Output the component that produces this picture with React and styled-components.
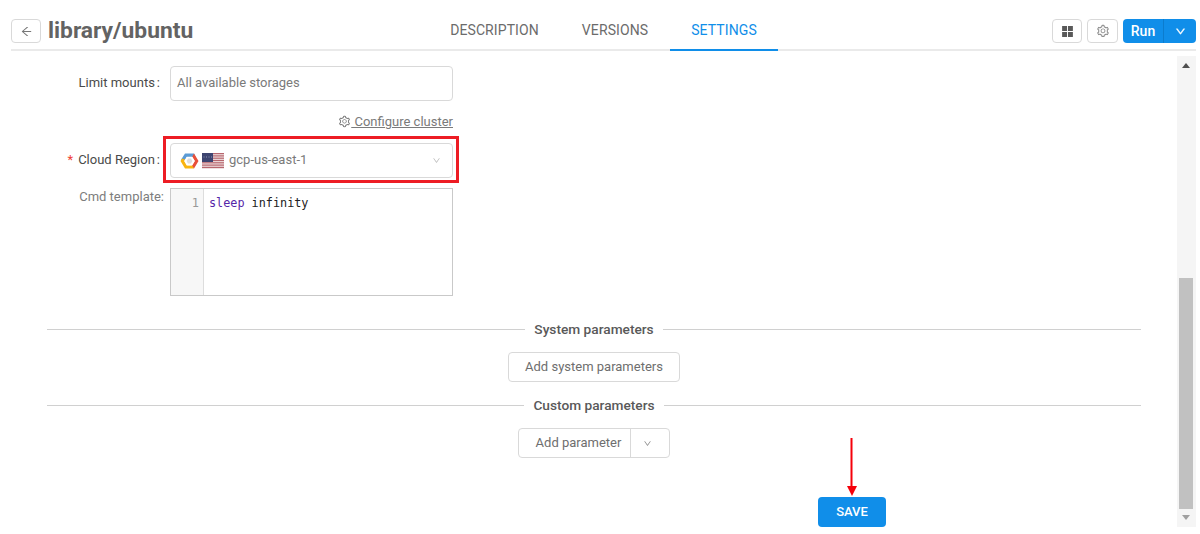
import React from 'react';
import styled, { createGlobalStyle } from 'styled-components';
import { AiOutlineSetting, AiOutlineArrowLeft, AiOutlineDown, AiFillAppstore } from 'react-icons/ai';

const GlobalStyle = createGlobalStyle`
  html, body {
    margin: 0;
    padding: 0;
    height: 534px;
    overflow: hidden;
    background: #fff;
    font-family: Roboto, "Liberation Sans", sans-serif;
    font-size: 14px;
    color: #595959;
  }
`;

const Page = styled.div`
  position: relative;
  width: 1200px;
  height: 534px;
  display: flex;
  flex-direction: column;
`;

const Header = styled.header`
  display: grid;
  grid-template-columns: 1fr auto 1fr;
  align-items: center;
  height: 49px;
  margin: 0 4px 0 11px;
  border-bottom: 2px solid #eaeaea;
  box-sizing: content-box;
`;

const TitleGroup = styled.div`
  display: flex;
  align-items: center;
  gap: 7px;
  margin-top: 11px;
`;

const IconButton = styled.button`
  display: flex;
  align-items: center;
  justify-content: center;
  width: ${p => p.$width || 30}px;
  height: 24px;
  padding: 0;
  background: #fff;
  border: 1px solid #d9d9d9;
  border-radius: 4px;
  color: ${p => p.$color || '#595959'};
  font-size: ${p => p.$size || 12}px;
`;

const Title = styled.h1`
  margin: 0;
  font-size: 22.8px;
  line-height: 26px;
  font-weight: 700;
  color: #636363;
`;

const Tabs = styled.nav`
  display: flex;
  align-self: stretch;
`;

const Tab = styled.div`
  display: flex;
  align-items: center;
  height: 51px;
  padding: 10px 21.5px 0;
  box-sizing: border-box;
  font-size: 14px;
  letter-spacing: 0.1px;
  color: ${p => (p.$active ? '#108ee9' : '#6b6b6b')};
  border-bottom: 2px solid ${p => (p.$active ? '#108ee9' : 'transparent')};
`;

const Actions = styled.div`
  display: flex;
  justify-content: flex-end;
  align-items: center;
  gap: 5px;
  margin-top: 11px;
`;

const RunButton = styled.div`
  display: flex;
  height: 24px;
  background: #108ee9;
  border-radius: 4px;
  color: #fff;
  font-size: 14px;
  font-weight: 500;
`;

const RunLabel = styled.span`
  display: flex;
  align-items: center;
  justify-content: center;
  width: 40px;
  padding-bottom: 1px;
  border-right: 1px solid #0c7ccd;
`;

const RunCaret = styled.span`
  display: flex;
  align-items: center;
  justify-content: center;
  width: 32px;
  padding-left: 1px;
  box-sizing: border-box;
  font-size: 11px;

  svg {
    stroke: currentColor;
    stroke-width: 50;
  }
`;

const Body = styled.div`
  flex: 1;
  display: flex;
  min-height: 0;
  padding-top: 5px;
`;

const Main = styled.main`
  width: 1177px;
  box-sizing: border-box;
  padding: 10px 36px 0 47px;
  display: flex;
  flex-direction: column;
`;

const FormRow = styled.div`
  display: grid;
  grid-template-columns: 113px 283px;
  column-gap: 10px;
  margin-bottom: ${p => p.$gap || 0}px;
`;

const Label = styled.label`
  display: flex;
  justify-content: flex-end;
  align-items: ${p => (p.$top ? 'flex-start' : 'center')};
  padding-bottom: ${p => (p.$top ? 0 : 2)}px;
  margin-right: ${p => (p.$top ? -4 : 0)}px;
  font-size: 13px;
  line-height: 18px;
  color: ${p => (p.$muted ? '#7d7d7d' : '#4a4a4a')};
  white-space: nowrap;
`;

const Colon = styled.span`
  margin-left: 2px;
`;

const Required = styled.span`
  color: #f04134;
  margin-right: 5px;
`;

const Input = styled.div`
  display: flex;
  align-items: center;
  height: 35px;
  box-sizing: border-box;
  padding: 0 6px 2px;
  border: 1px solid #d9d9d9;
  border-radius: 4px;
  font-size: 13px;
  color: #7a7a7a;
`;

const LinkRow = styled.div`
  display: flex;
  justify-content: flex-end;
  align-items: center;
  width: 406px;
  height: 42px;
  padding-bottom: 2px;
  box-sizing: border-box;
  font-size: 13px;
  color: #7a7a7a;
`;

const ConfigureLink = styled.span`
  display: flex;
  align-items: center;
  text-decoration: underline;
  white-space: pre;
`;

const SelectBox = styled(Input)`
  padding: 0 11px 0 9px;
  gap: 3px;
`;

const RegionName = styled.span`
  flex: 1;
  margin: 0 0 2px 2px;
  font-size: 13px;
`;

const SelectCaret = styled.span`
  display: flex;
  font-size: 9px;
  color: #bbb;
`;

const Editor = styled.div`
  display: flex;
  height: 108px;
  box-sizing: border-box;
  border: 1px solid #c9c9c9;
  background: #fff;
`;

const Gutter = styled.div`
  width: 33px;
  background: #f7f7f7;
  border-right: 1px solid #ddd;
  box-sizing: border-box;
  padding: 7px 4px 0 0;
  text-align: right;
  font: 12px/15px "DejaVu Sans Mono", monospace;
  color: #999;
`;

const Code = styled.pre`
  margin: 0;
  padding: 7px 4px 0 5px;
  font: 11.8px/15px "DejaVu Sans Mono", monospace;
  color: #222;
`;

const Keyword = styled.span`
  color: #5526a8;
`;

const SectionDivider = styled.div`
  display: flex;
  align-items: center;
  gap: 9px;
  height: 20px;
  margin-top: ${p => p.$top}px;
  font-size: 13.7px;
  font-weight: 500;
  color: #595959;
  white-space: nowrap;

  &::before,
  &::after {
    content: '';
    flex: 1;
    height: 1px;
    background: #d0d0d0;
  }
`;

const Centered = styled.div`
  display: flex;
  justify-content: center;
  margin-top: ${p => p.$top}px;
`;

const OutlineButton = styled.div`
  display: flex;
  align-items: center;
  height: 30px;
  box-sizing: border-box;
  background: #fff;
  border: 1px solid #d9d9d9;
  border-radius: 4px;
  font-size: 13px;
  color: #6e6e6e;
  padding: ${p => p.$padding || '0 16.5px 1px'};
`;

const SplitLabel = styled.span`
  display: flex;
  align-items: center;
  height: 100%;
  padding: 0 9px 1px 17px;
  box-sizing: border-box;
  border-right: 1px solid #d9d9d9;
`;

const SplitCaret = styled.span`
  display: flex;
  align-items: center;
  justify-content: center;
  width: 38px;
  padding-right: 6px;
  box-sizing: border-box;
  font-size: 9px;
  color: #888;
`;

const SaveRow = styled.div`
  display: flex;
  margin: 39px 0 0 771px;
`;

const SaveButton = styled.button`
  width: 68px;
  height: 30px;
  padding: 0 0 2px;
  border: none;
  background: #108ee9;
  border-radius: 4px;
  color: #fff;
  font-family: inherit;
  font-size: 13px;
  font-weight: 500;
`;

const Scrollbar = styled.div`
  position: relative;
  width: 19px;
  height: 471px;
  background: #f5f5f5;
`;

const ScrollThumb = styled.div`
  position: absolute;
  left: 2px;
  top: 222px;
  width: 14px;
  height: 231px;
  background: #c1c1c1;
`;

const ScrollArrow = styled.div`
  position: absolute;
  left: 5px;
  width: 0;
  height: 0;
  border-left: 4.5px solid transparent;
  border-right: 4.5px solid transparent;
  ${p =>
    p.$up
      ? 'top: 7px; border-bottom: 5px solid #505050;'
      : 'bottom: 7px; border-top: 5px solid #a0a0a0;'}
`;

const Highlight = styled.div`
  position: absolute;
  left: 163px;
  top: 136px;
  width: 296px;
  height: 47px;
  box-sizing: border-box;
  border: 3px solid #ed1c24;
  pointer-events: none;
`;

const ArrowMark = styled.svg`
  position: absolute;
  left: 845px;
  top: 438px;
`;

const GcpLogo = () => (
  <svg width="19" height="16" viewBox="0 0 19 16">
    <path d="M5 0.5h9l1.8 3.4H6.8L4.6 7.6 1 6.8Z" fill="#5b9bd5" />
    <path d="M14 0.5 18.5 8l-4.5 7.5-2.6-2.2L14.6 8l-2.4-4.2Z" fill="#e8503a" />
    <path d="M0.5 8 5 15.5h9l-2-3.2H6.8L4.4 8l.6-1.4-3-1.2Z" fill="#f9b512" />
    <path d="M6.8 3.8h5.4L14.9 8l-2.7 4.4H6.8L4.2 8Z" fill="#fff" />
    <path d="M8 5.5h3L12.4 8 11 10.5H8L6.6 8Z" fill="#dedede" />
  </svg>
);

const stripes = [0, 1, 2, 3, 4, 5, 6];

const stars = [1.5, 4, 6.5, 9];

const UsFlag = () => (
  <svg width="22" height="16" viewBox="0 0 22 16">
    <rect width="22" height="16" fill="#efe0e0" />
    {stripes.map(i => (
      <rect key={i} y={i * 2.3} width="22" height="1.2" fill="#b7666e" />
    ))}
    <rect width="11" height="9" fill="#3d4470" />
    {stars.map(x => (
      <rect key={x} x={x} y="3.5" width="1" height="1" fill="#8d92b0" />
    ))}
  </svg>
);

const DownArrow = () => (
  <ArrowMark width="14" height="58" viewBox="0 0 14 58">
    <rect x="5.5" y="0" width="2" height="49" fill="#f5000a" />
    <path d="M2 48h10l-5 10Z" fill="#f5000a" />
  </ArrowMark>
);

export default function App() {
  return (
    <Page>
      <GlobalStyle />
      <Header>
        <TitleGroup>
          <IconButton $width={30} $color="#777" $size={13}>
            <AiOutlineArrowLeft />
          </IconButton>
          <Title>library/ubuntu</Title>
        </TitleGroup>
        <Tabs>
          <Tab>DESCRIPTION</Tab>
          <Tab>VERSIONS</Tab>
          <Tab $active>SETTINGS</Tab>
        </Tabs>
        <Actions>
          <IconButton $width={30} $size={15}>
            <AiFillAppstore />
          </IconButton>
          <IconButton $width={31} $color="#888" $size={14}>
            <AiOutlineSetting />
          </IconButton>
          <RunButton>
            <RunLabel>Run</RunLabel>
            <RunCaret>
              <AiOutlineDown />
            </RunCaret>
          </RunButton>
        </Actions>
      </Header>
      <Body>
        <Main>
          <FormRow>
            <Label>Limit mounts<Colon>:</Colon></Label>
            <Input>All available storages</Input>
          </FormRow>
          <LinkRow>
            <ConfigureLink>
              <AiOutlineSetting size={13} /> Configure cluster
            </ConfigureLink>
          </LinkRow>
          <FormRow $gap={10}>
            <Label>
              <Required>*</Required>Cloud Region<Colon>:</Colon>
            </Label>
            <SelectBox>
              <GcpLogo />
              <UsFlag />
              <RegionName>gcp-us-east-1</RegionName>
              <SelectCaret>
                <AiOutlineDown />
              </SelectCaret>
            </SelectBox>
          </FormRow>
          <FormRow>
            <Label $top $muted>Cmd template:</Label>
            <Editor>
              <Gutter>1</Gutter>
              <Code>
                <Keyword>sleep</Keyword> infinity
              </Code>
            </Editor>
          </FormRow>
          <SectionDivider $top={23}>System parameters</SectionDivider>
          <Centered $top={13}>
            <OutlineButton>Add system parameters</OutlineButton>
          </Centered>
          <SectionDivider $top={13}>Custom parameters</SectionDivider>
          <Centered $top={13}>
            <OutlineButton $padding="0">
              <SplitLabel>Add parameter</SplitLabel>
              <SplitCaret>
                <AiOutlineDown />
              </SplitCaret>
            </OutlineButton>
          </Centered>
          <SaveRow>
            <SaveButton>SAVE</SaveButton>
          </SaveRow>
        </Main>
        <Scrollbar>
          <ScrollArrow $up />
          <ScrollThumb />
          <ScrollArrow />
        </Scrollbar>
      </Body>
      <Highlight />
      <DownArrow />
    </Page>
  );
}
